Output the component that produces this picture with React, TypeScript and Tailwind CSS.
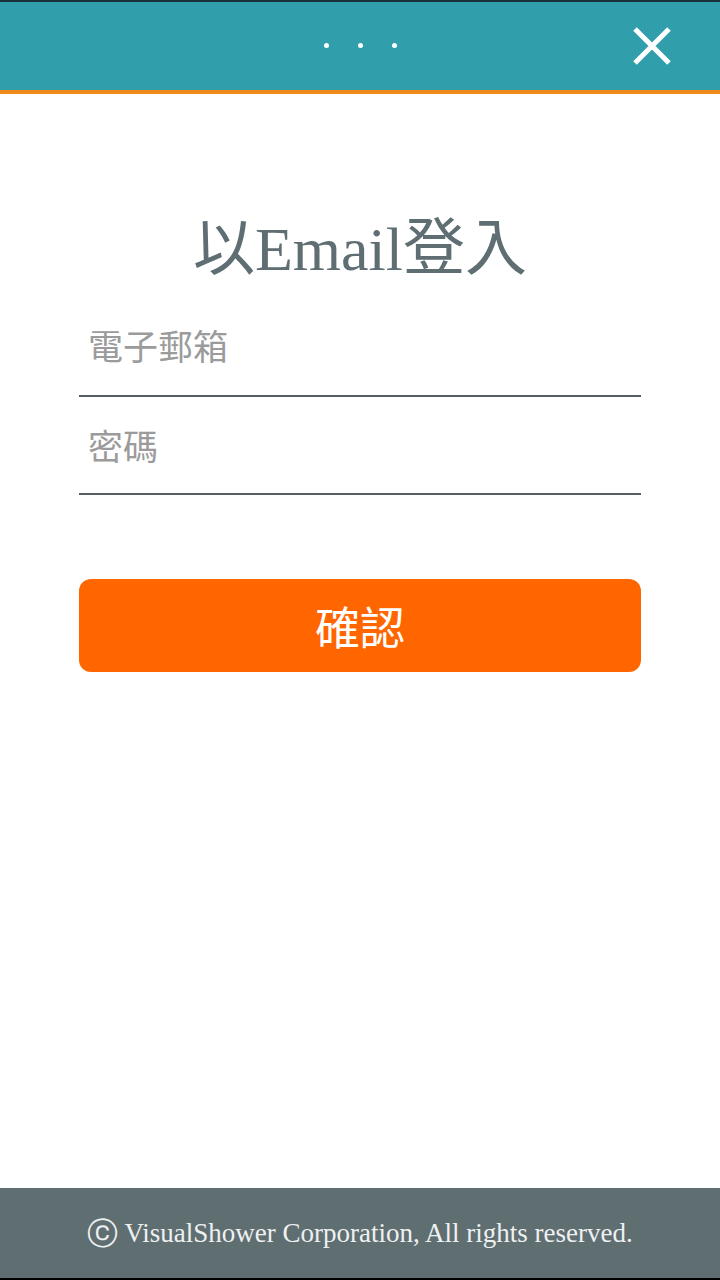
const cjk = "font-['Noto_Sans_CJK_TC','Noto_Sans',sans-serif]";

const App = () => {
    return (
        <div className="flex flex-col w-[720px] h-[1280px] bg-white">
            <div className="h-[2px] bg-[#17303a]" />
            <header className="relative flex items-center justify-center h-[92px] bg-[#309eab] border-b-[4px] border-[#ee8a1a]">
                <div className="flex gap-[29px] mb-[2px]">
                    <span className="w-[5px] h-[5px] rounded-full bg-white" />
                    <span className="w-[5px] h-[5px] rounded-full bg-white" />
                    <span className="w-[5px] h-[5px] rounded-full bg-white" />
                </div>
                <button className="absolute right-[49px] top-[25px]">
                    <svg width="38" height="38" viewBox="0 0 38 38" fill="none" stroke="white" strokeWidth="5">
                        <path d="M2 2 L36 36 M36 2 L2 36" />
                    </svg>
                </button>
            </header>

            <main className="flex-1 flex flex-col px-[79px]">
                <h1 className="mt-[113px] text-center text-[62px] leading-[72px] text-[#5f6e72] font-['Liberation_Serif','Noto_Sans_CJK_TC',serif]">
                    <span className={cjk}>以</span>Email<span className={cjk}>登入</span>
                </h1>
                <label className="flex items-center h-[91px] mt-[21px] pb-[11px] border-b-2 border-[#555f63] px-[9px]">
                    <input
                        type="text"
                        placeholder="電子郵箱"
                        className={`w-full text-[35px] text-[#555] placeholder:text-[#9b9b9b] outline-none ${cjk}`}
                    />
                </label>
                <label className="flex items-center h-[98px] border-b-2 border-[#555f63] px-[9px]">
                    <input
                        type="password"
                        placeholder="密碼"
                        className={`w-full text-[35px] text-[#555] placeholder:text-[#9b9b9b] outline-none ${cjk}`}
                    />
                </label>
                <button className={`mt-[84px] h-[93px] rounded-[12px] bg-[#ff6600] text-white text-[45px] ${cjk}`}>
                    確認
                </button>
            </main>

            <footer className="flex items-center justify-center h-[90px] pt-[3px] bg-[#5f6e71] text-[27px] font-['Liberation_Serif',serif]">
                <span className="text-[#eef1f1]">
                    <span className="text-[31px] align-[-2px]">ⓒ</span> VisualShower Corporation, All rights reserved.
                </span>
            </footer>
            <div className="h-[2px] bg-black" />
        </div>
    );
};

export default App;
